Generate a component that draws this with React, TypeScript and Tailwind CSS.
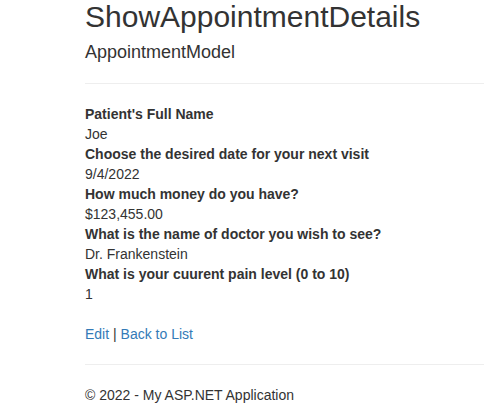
const details = [
  { label: "Patient's Full Name", value: 'Joe' },
  { label: 'Choose the desired date for your next visit', value: '9/4/2022' },
  { label: 'How much money do you have?', value: '$123,455.00' },
  { label: 'What is the name of doctor you wish to see?', value: 'Dr. Frankenstein' },
  { label: 'What is your cuurent pain level (0 to 10)', value: '1' },
]

export default function App() {
  return (
    <div className="pl-[85px] font-['Liberation_Sans',Arial,sans-serif] text-[14px] leading-[20px] text-[#333] bg-white">
      {/* Page header */}
      <h2 className="text-[30px] leading-[33px] font-normal mb-[10px]">ShowAppointmentDetails</h2>
      <div>
        <h4 className="text-[18px] leading-[19.8px] font-normal mt-[10px] mb-[10px]">AppointmentModel</h4>
        <hr className="my-5 border-t border-[#eee]" />

        {/* Details list */}
        <dl className="mb-5">
          {details.map((d) => (
            <div key={d.label}>
              <dt className="font-bold">{d.label}</dt>
              <dd>{d.value}</dd>
            </div>
          ))}
        </dl>
      </div>
      <p>
        <a href="#" className="text-[#337ab7]">Edit</a> |{' '}
        <a href="#" className="text-[#337ab7]">Back to List</a>
      </p>

      <hr className="mt-5 mb-5 border-t border-[#eee]" />
      <footer>
        <p>© 2022 - My ASP.NET Application</p>
      </footer>
    </div>
  )
}
